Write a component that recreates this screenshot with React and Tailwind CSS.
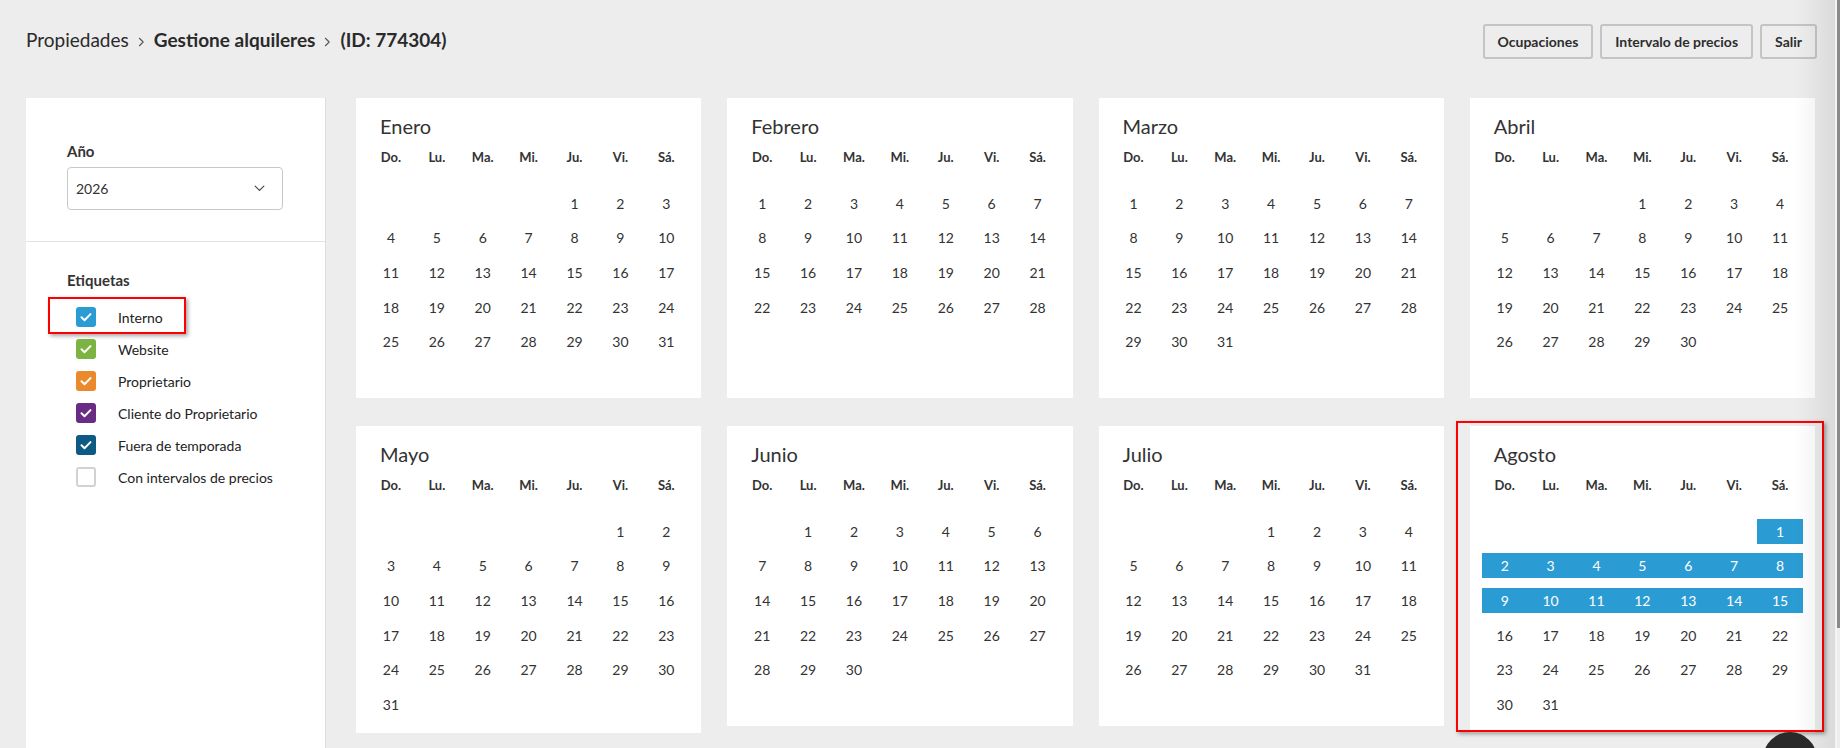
import React from "react";

const YEAR = 2026;
const MONTHS = ["Enero", "Febrero", "Marzo", "Abril", "Mayo", "Junio", "Julio", "Agosto"];
const WEEKDAYS = ["Do.", "Lu.", "Ma.", "Mi.", "Ju.", "Vi.", "Sá."];

const TAGS = [
  { label: "Interno", color: "bg-[#2b9bd4]", checked: true, marked: true },
  { label: "Website", color: "bg-[#7cb342]", checked: true },
  { label: "Proprietario", color: "bg-[#ea8a2c]", checked: true },
  { label: "Cliente do Proprietario", color: "bg-[#682c85]", checked: true },
  { label: "Fuera de temporada", color: "bg-[#0d5a82]", checked: true },
  { label: "Con intervalos de precios", color: "", checked: false },
];

// Booked ranges per month index (day numbers inclusive)
const BOOKED = { 7: [1, 15] };

function Check() {
  return (
    <svg viewBox="0 0 20 20" className="h-[20px] w-[20px]" fill="none">
      <path d="M5.5 10.3l3 3 6-6.2" stroke="white" strokeWidth="2" strokeLinecap="round" strokeLinejoin="round" />
    </svg>
  );
}

function ChevronDown() {
  return (
    <svg viewBox="0 0 12 8" className="h-[7px] w-[11px]" fill="none">
      <path d="M1 1.2l5 5 5-5" stroke="#444" strokeWidth="1.3" strokeLinecap="round" strokeLinejoin="round" />
    </svg>
  );
}

function Crumb() {
  return (
    <svg viewBox="0 0 8 12" className="mx-[9px] mt-[3px] h-[10px] w-[7px]" fill="none">
      <path d="M1.5 1.5l4.5 4.5-4.5 4.5" stroke="#555" strokeWidth="1.3" strokeLinecap="round" strokeLinejoin="round" />
    </svg>
  );
}

function MonthCard({ index, name, marked }) {
  const first = new Date(YEAR, index, 1).getDay();
  const total = new Date(YEAR, index + 1, 0).getDate();
  const cells = [];
  for (let i = 0; i < first; i++) cells.push(null);
  for (let d = 1; d <= total; d++) cells.push(d);
  const range = BOOKED[index];

  return (
    <div className="relative min-h-[300px] bg-white px-[12px] pt-[14px] pb-[11px]">
      <div className="pl-[12px] text-[20px] leading-[28px] text-[#333]">{name}</div>
      <div className="mt-[8px] grid grid-cols-7 text-center text-[13px] font-bold leading-[18px] text-[#333]">
        {WEEKDAYS.map((w) => (
          <div key={w}>{w}</div>
        ))}
      </div>
      <div className="mt-[20px] grid grid-cols-7 text-center text-[14px] text-[#333]">
        {cells.map((d, i) => {
          const booked = d && range && d >= range[0] && d <= range[1];
          return (
            <div key={i} className="flex h-[34.6px] items-center">
              {d && (
                <span
                  className={
                    booked
                      ? "h-[25px] w-full bg-[#2b9bd4] leading-[25px] text-white"
                      : "h-[25px] w-full leading-[25px]"
                  }
                >
                  {d}
                </span>
              )}
            </div>
          );
        })}
      </div>
      {marked && (
        <div className="pointer-events-none absolute -top-[5px] -left-[14px] -right-[9px] bottom-[1px] border-2 border-[#ff0000] shadow-[2px_2px_4px_rgba(0,0,0,0.35)]" />
      )}
    </div>
  );
}

export default function App() {
  return (
    <div className="relative flex h-[748px] flex-col overflow-hidden bg-[#ededed] font-['Lato','Open_Sans',sans-serif] text-[#333]">
      {/* Header: breadcrumb + actions */}
      <header className="flex h-[98px] shrink-0 items-start justify-between pt-[24px] pl-[26px] pr-[23px]">
        <div className="flex h-[32px] items-center text-[19px] leading-[24px] text-[#2a2a2a]">
          <span>Propiedades</span>
          <Crumb />
          <span className="font-bold">Gestione alquileres</span>
          <Crumb />
          <span className="font-bold">(ID: 774304)</span>
        </div>
        <div className="flex gap-[7px]">
          {["Ocupaciones", "Intervalo de precios", "Salir"].map((b) => (
            <button
              key={b}
              className="h-[35px] rounded-[3px] border-2 border-[#c4c4c4] bg-[#ededed] px-[13px] text-[14px] font-bold text-[#2d2d2d]"
            >
              {b}
            </button>
          ))}
        </div>
      </header>

      <div className="flex min-h-0 flex-1 gap-[30px] pl-[26px] pr-[25px]">
        {/* Filters */}
        <aside className="w-[300px] shrink-0 border-r border-[#dcdcdc] bg-white">
          <div className="px-[41px] pt-[43px] pb-[31px]">
            <div className="text-[15px] font-bold leading-[20px] text-[#333]">Año</div>
            <div className="mt-[6px] flex h-[43px] w-[216px] items-center justify-between rounded-[4px] border border-[#c8c8c8] pl-[8px] pr-[17px] text-[14px] text-[#333]">
              <span>2026</span>
              <ChevronDown />
            </div>
          </div>
          <div className="h-px bg-[#e2e2e2]" />
          <div className="px-[41px] pt-[28px]">
            <div className="text-[15px] font-bold leading-[20px] text-[#333]">Etiquetas</div>
            <div className="mt-[17px] flex flex-col gap-[12px] pl-[9px]">
              {TAGS.map((t) => (
                <div key={t.label} className="relative flex h-[20px] items-center gap-[22px]">
                  {t.checked ? (
                    <span className={"flex h-[20px] w-[20px] shrink-0 items-center justify-center rounded-[3px] " + t.color}>
                      <Check />
                    </span>
                  ) : (
                    <span className="h-[20px] w-[20px] shrink-0 rounded-[3px] border-2 border-[#d2d2d2] bg-white" />
                  )}
                  <span className="text-[14px] text-[#222]">{t.label}</span>
                  {t.marked && (
                    <div className="pointer-events-none absolute -top-[10px] -left-[28px] h-[37px] w-[138px] border-2 border-[#ff0000] shadow-[2px_2px_4px_rgba(0,0,0,0.35)]" />
                  )}
                </div>
              ))}
            </div>
          </div>
        </aside>

        {/* Months */}
        <div className="grid flex-1 grid-cols-4 content-start items-start gap-x-[26px] gap-y-[28px]">
          {MONTHS.map((m, i) => (
            <MonthCard key={m} index={i} name={m} marked={i === 7} />
          ))}
        </div>
      </div>

      {/* Right edge shade and scrollbar */}
      <div className="pointer-events-none absolute top-0 right-[5px] bottom-0 w-[40px] bg-linear-to-r from-transparent to-[rgba(0,0,0,0.08)]" />
      <div className="pointer-events-none absolute top-0 right-[3px] bottom-0 w-[2px] bg-[#f4f4f4]" />
      <div className="pointer-events-none absolute top-0 right-0 h-[628px] w-[3px] bg-[#8a8a8a]" />

      {/* Floating help button */}
      <div className="absolute top-[732px] left-[1763px] h-[54px] w-[54px] rounded-full bg-[#2a2a2a]" />
    </div>
  );
}
